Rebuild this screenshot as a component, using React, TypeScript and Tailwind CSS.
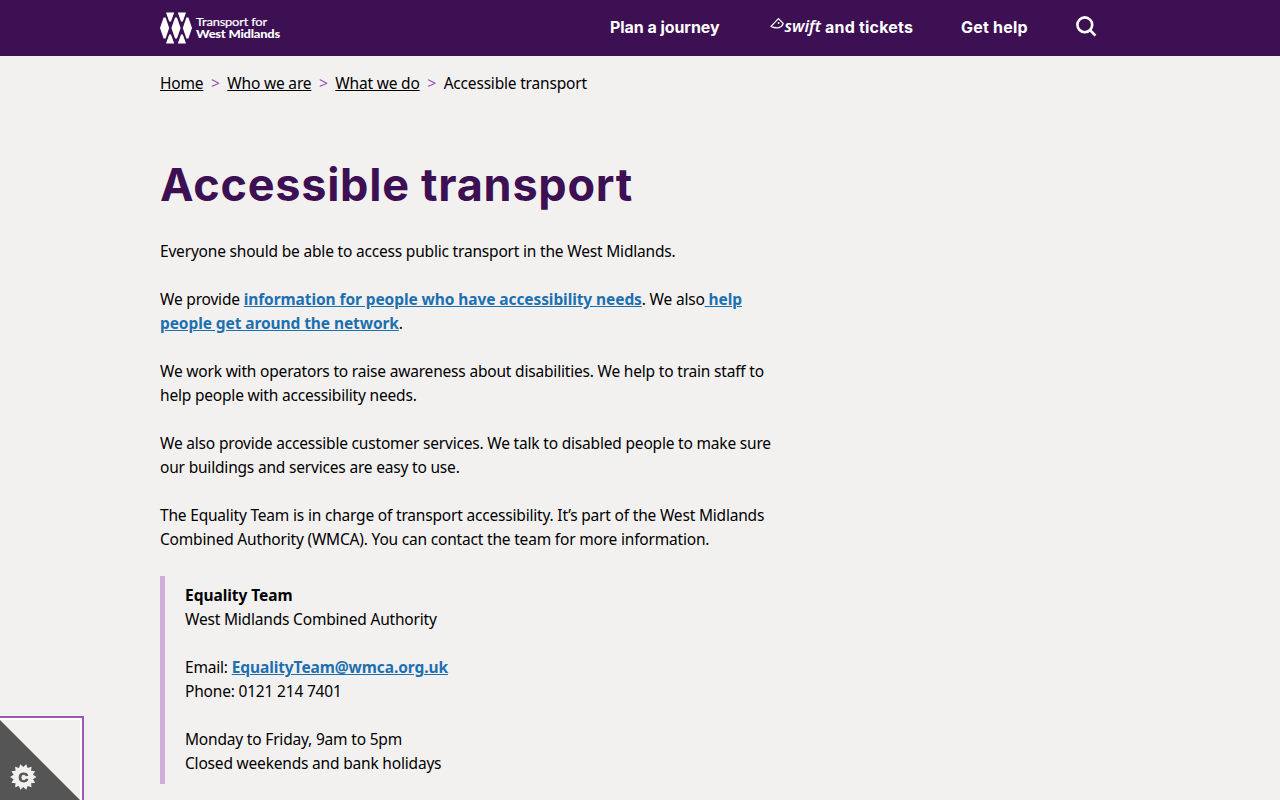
import type { ReactNode } from "react";

const BREADCRUMBS = ["Home", "Who we are", "What we do"];

const GEAR_POINTS = Array.from({ length: 28 }, (_, i) => {
  const radius = i % 2 === 0 ? 13.2 : 9.9;
  const angle = (i * Math.PI) / 14;
  return `${(23.3 + radius * Math.cos(angle)).toFixed(2)},${(59 + radius * Math.sin(angle)).toFixed(2)}`;
}).join(" ");

function Logo() {
  return (
    <a href="#" className="flex w-[120px] shrink-0 items-center" aria-label="Transport for West Midlands">
      <svg width="120" height="32" viewBox="0 0 120 32" fill="#fff" className="overflow-visible">
        <path d="M6 .4h8.2L11 9.6H9.2zM17.8.4H26L22.8 9.6H21zM6 31.6h8.2L11 22.4H9.2zM17.8 31.6H26L22.8 22.4H21z" />
        <path d="M3.6 5.6h2L9.2 16 5.6 26.4h-2L0 16zM15 5.6h2L20.6 16 17 26.4h-2L11.4 16zM26.4 5.6h2L32 16l-3.6 10.4h-2L22.8 16z" />
        <text x="36" y="14.4" fontSize="12" fontFamily="Lato, sans-serif" textLength="71" lengthAdjust="spacingAndGlyphs" stroke="#fff" strokeWidth=".2">
          Transport for
        </text>
        <text x="36" y="26" fontSize="12" fontWeight="900" fontFamily="Lato, sans-serif" textLength="84" lengthAdjust="spacingAndGlyphs">
          West Midlands
        </text>
      </svg>
    </a>
  );
}

function SwiftLogo() {
  return (
    <svg width="52" height="20" viewBox="0 0 52 20" fill="none" role="img" aria-label="Swift" className="overflow-visible">
      <path d="M1 9.4 8.4 1.6 13.2 6.4C12 10.8 7 12.4 1 9.4z" stroke="#fff" strokeWidth="1.3" strokeLinejoin="round" />
      <circle cx="8.6" cy="6" r=".9" fill="#fff" />
      <text x="14.5" y="14.8" fontSize="16.5" fontWeight="600" fontStyle="italic" fontFamily="'Noto Sans', sans-serif" textLength="36.5" lengthAdjust="spacingAndGlyphs" letterSpacing="0" fill="#fff">
        swift
      </text>
    </svg>
  );
}

function Header() {
  return (
    <header className="h-14 bg-[#3c1053] text-white">
      <div className="mx-auto flex h-14 w-[960px] items-center">
        <Logo />
        <nav className="mb-0.5 ml-[330px] flex items-center font-['Inter',sans-serif] text-base font-bold leading-6">
          <a href="#" className="w-40 whitespace-nowrap tracking-[-0.06px]">Plan a journey</a>
          <a href="#" className="flex w-[191px] items-center whitespace-nowrap tracking-[0.2px]">
            <SwiftLogo />
            <span className="ml-[3px]">and tickets</span>
          </a>
          <a href="#" className="w-[115px] whitespace-nowrap tracking-[0.2px]">Get help</a>
        </nav>
        <button aria-label="Search" className="mb-1">
          <svg width="21" height="21" viewBox="0 0 21 21" fill="none" stroke="#fff" strokeWidth="2.6">
            <circle cx="8.8" cy="8.8" r="7.4" />
            <path d="m14 14 5.4 5.6" />
          </svg>
        </button>
      </div>
    </header>
  );
}

function Breadcrumbs() {
  return (
    <nav aria-label="Breadcrumb" className="flex pt-[15px]">
      {BREADCRUMBS.map((label) => (
        <span key={label} className="flex">
          <a href="#" className="underline">{label}</a>
          <span className="w-6 text-center text-[#9b58b5]">&gt;</span>
        </span>
      ))}
      <span>Accessible transport</span>
    </nav>
  );
}

function TextLink({ children }: { children: ReactNode }) {
  return <a href="#" className="font-bold tracking-[-0.09px] text-[#1d70b0] underline">{children}</a>;
}

function ContactDetails() {
  return (
    <div className="mt-[25px] border-l-[5px] border-[#ceaed9] pt-[7px] pb-[9px] pl-5">
      <p className="mb-6">
        <strong className="tracking-[-0.05px]">Equality Team</strong>
        <br />
        West Midlands Combined Authority
      </p>
      <p className="mb-6">
        Email: <TextLink>EqualityTeam@wmca.org.uk</TextLink>
        <br />
        Phone: 0121 214 7401
      </p>
      <p>
        Monday to Friday, 9am to 5pm
        <br />
        Closed weekends and bank holidays
      </p>
    </div>
  );
}

function CookieButton() {
  return (
    <button aria-label="Cookie preferences" className="fixed bottom-0 left-0 h-[84px] w-[84px] border-t-2 border-r-2 border-[#9b58b5]">
      <svg width="82" height="82" viewBox="0 0 82 82">
        <path d="M0 0H82V82H80V2H0z" fill="#fff" />
        <path d="M0 2 80 82H0z" fill="#555" />
        <polygon points={GEAR_POINTS} fill="#f3f1f0" />
        <text x="23.3" y="63.9" textAnchor="middle" fontSize="13.5" fontWeight="700" fontFamily="'Liberation Sans', sans-serif" fill="#555" stroke="#555" strokeWidth=".8">
          C
        </text>
      </svg>
    </button>
  );
}

export default function App() {
  return (
    <div className="h-screen overflow-hidden bg-[#f3f1f0] font-['Noto_Sans',sans-serif] text-[15.5px] leading-6 tracking-[-0.19px] text-black">
      <Header />
      <main className="mx-auto w-[960px]">
        <Breadcrumbs />
        <div className="w-[620px]">
          <h1 className="mt-[62px] whitespace-nowrap font-['Inter',sans-serif] text-[45px] font-bold leading-[56px] tracking-[0.74px] text-[#3c1053]">
            Accessible transport
          </h1>
          <p className="mt-[26px]">Everyone should be able to access public transport in the West Midlands.</p>
          <p className="mt-6">
            We provide <TextLink>information for people who have accessibility needs</TextLink>. We also
            <TextLink> help people get around the network</TextLink>.
          </p>
          <p className="mt-6">
            We work with operators to raise awareness about disabilities. We help to train staff to help people with
            accessibility needs.
          </p>
          <p className="mt-6">
            We also provide accessible customer services. We talk to disabled people to make sure our buildings and
            services are easy to use.
          </p>
          <p className="mt-6">
            The Equality Team is in charge of transport accessibility. It’s part of the West Midlands Combined Authority
            (WMCA). You can contact the team for more information.
          </p>
          <ContactDetails />
        </div>
      </main>
      <CookieButton />
    </div>
  );
}
